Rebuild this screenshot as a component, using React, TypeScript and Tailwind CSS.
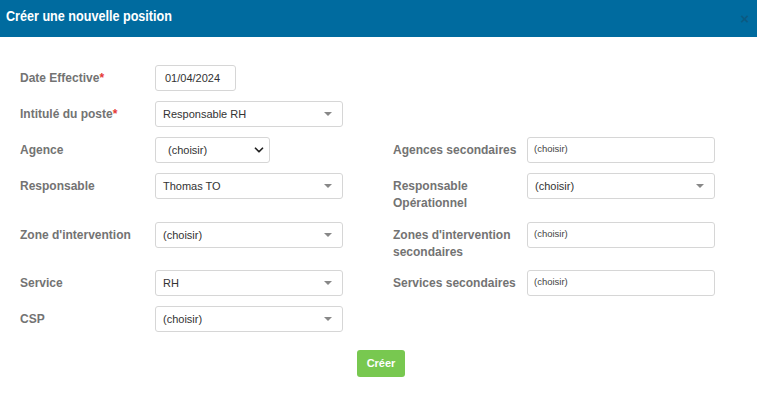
import { ChevronDown } from 'lucide-react';

const Caret = () => (
  <span className="ml-auto h-0 w-0 border-x-[4px] border-t-[4px] border-x-transparent border-t-[#888]" />
);

function Label({ text, required, tight }: { text: React.ReactNode; required?: boolean; tight?: boolean }) {
  return (
    <div className={`pt-[5px] text-[12px] font-bold leading-[17px] text-[#737373] ${tight ? '-mb-[1px]' : ''}`}>
      {text}
      {required && <span className="text-[#e53935]">*</span>}
    </div>
  );
}

function Select2({ value }: { value: string }) {
  return (
    <div className="flex h-[26px] w-[188px] items-center rounded-[3px] border border-[#d6d6d6] bg-white pl-[7px] pr-[10px] text-[11px] text-[#333]">
      <span>{value}</span>
      <Caret />
    </div>
  );
}

function MultiInput() {
  return (
    <div className="flex h-[26px] w-[188px] items-start rounded-[3px] border border-[#d6d6d6] bg-white pl-[6px] pt-[5px] text-[9.5px] leading-[12px] text-[#444]">
      (choisir)
    </div>
  );
}

export default function App() {
  return (
    <div className="h-[396px] w-[757px] bg-white font-['Liberation_Sans',Arial,sans-serif]">
      {/* Header */}
      <div className="flex h-[37px] items-center justify-between bg-[#006b9f] pb-[4px] pl-[6px] pr-[8px]">
        <h3 className="origin-left scale-x-[0.9] whitespace-nowrap text-[14px] font-bold text-white">
          Créer une nouvelle position
        </h3>
        <span className="pt-[4px] text-[15px] font-bold leading-none text-[#0b5a82]">×</span>
      </div>

      {/* Body */}
      <div className="pl-[20px] pt-[28px]">
        <div className="grid grid-cols-[135px_188px_50px_134px_188px] gap-y-[10px]">
          <Label text="Date Effective" required />
          <div>
            <div className="flex h-[26px] w-[81px] items-center rounded-[3px] border border-[#d6d6d6] pl-[9px] text-[11px] text-[#333]">
              01/04/2024
            </div>
          </div>
          <div />
          <div />
          <div />

          <Label text="Intitulé du poste" required />
          <Select2 value="Responsable RH" />
          <div />
          <div />
          <div />

          <Label text="Agence" />
          <div>
            <div className="flex h-[26px] w-[115px] items-center rounded-[3px] border border-[#d6d6d6] pl-[12px] pr-[3px] text-[11px] text-[#333]">
              <span>(choisir)</span>
              <ChevronDown className="ml-auto h-[14px] w-[14px] text-[#222]" strokeWidth={3} />
            </div>
          </div>
          <div />
          <Label text="Agences secondaires" />
          <MultiInput />

          <Label text="Responsable" />
          <Select2 value="Thomas TO" />
          <div />
          <Label text={<>Responsable<br />Opérationnel</>} />
          <Select2 value="(choisir)" />

          <Label text="Zone d'intervention" />
          <Select2 value="(choisir)" />
          <div />
          <Label text={<>Zones d'intervention<br />secondaires</>} tight />
          <MultiInput />

          <Label text="Service" />
          <Select2 value="RH" />
          <div />
          <Label text="Services secondaires" />
          <MultiInput />

          <Label text="CSP" />
          <Select2 value="(choisir)" />
          <div />
          <div />
          <div />
        </div>

        <div className="mt-[18px] flex justify-center pr-[15px]">
          <button className="h-[27px] rounded-[3px] bg-[#78c850] px-[10px] text-[11px] font-bold text-white">
            Créer
          </button>
        </div>
      </div>
    </div>
  );
}
